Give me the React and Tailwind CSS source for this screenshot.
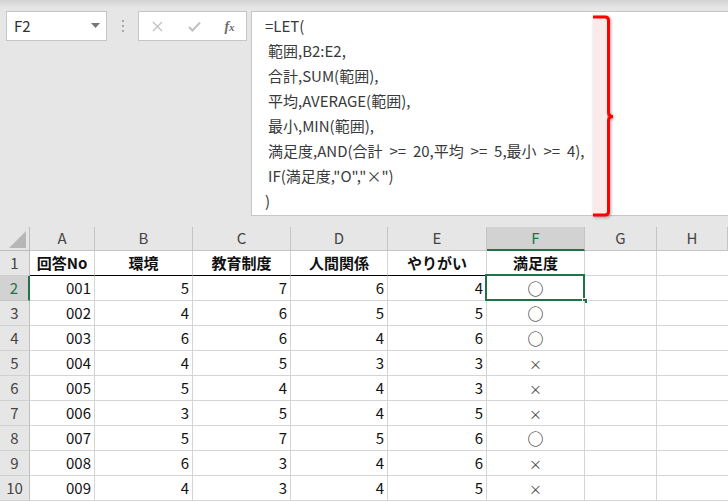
import React from "react";

const FONT = { fontFamily: '"Noto Sans CJK JP", "Noto Sans", sans-serif' };

const COLS = ["A", "B", "C", "D", "E", "F", "G", "H"];

const HEAD = ["回答No", "環境", "教育制度", "人間関係", "やりがい", "満足度"];

const ROWS = [
  ["001", 5, 7, 6, 4, "○"],
  ["002", 4, 6, 5, 5, "○"],
  ["003", 6, 6, 4, 6, "○"],
  ["004", 4, 5, 3, 3, "×"],
  ["005", 5, 4, 4, 3, "×"],
  ["006", 3, 5, 4, 5, "×"],
  ["007", 5, 7, 5, 6, "○"],
  ["008", 6, 3, 4, 6, "×"],
  ["009", 4, 3, 4, 5, "×"],
];

// indented lines get a small left pad instead of a leading space
const FORMULA = [
  { t: "=LET(", ind: false },
  { t: "範囲,B2:E2,", ind: true },
  { t: "合計,SUM(範囲),", ind: true },
  { t: "平均,AVERAGE(範囲),", ind: true },
  { t: "最小,MIN(範囲),", ind: true },
  { t: "満足度,AND(合計 >= 20,平均 >= 5,最小 >= 4),", ind: true },
  { t: 'IF(満足度,"O","×")', ind: true },
  { t: ")", ind: false },
];

const FormulaBar = () => (
  <div className="h-[227px] bg-[#e6e6e6]">
    <div className="h-[8px] bg-gradient-to-b from-[#d3d3d3] to-[#e6e6e6]" />
    <div className="flex items-start pt-[3px]">
      {/* name box */}
      <div className="ml-[6px] flex h-[30px] w-[101px] items-center justify-between border border-[#c6c6c6] bg-white pl-[7px] pr-[6px]">
        <span className="text-[15px] text-[#333]">F2</span>
        <svg width="9" height="6" viewBox="0 0 9 6">
          <path d="M0 0H9L4.5 5Z" fill="#777" />
        </svg>
      </div>
      <div className="flex h-[30px] w-[31px] flex-col items-center justify-center gap-[3px]">
        <span className="h-[2px] w-[2px] bg-[#a8a8a8]" />
        <span className="h-[2px] w-[2px] bg-[#a8a8a8]" />
        <span className="h-[2px] w-[2px] bg-[#a8a8a8]" />
      </div>
      {/* cancel / enter / fx */}
      <div className="flex h-[30px] w-[109px] items-center border border-[#c6c6c6] bg-white">
        <div className="flex w-[37px] justify-center">
          <svg width="11" height="11" viewBox="0 0 11 11">
            <path d="M1 1L10 10M10 1L1 10" stroke="#c2c2c2" strokeWidth="1.4" />
          </svg>
        </div>
        <div className="flex w-[37px] justify-center">
          <svg width="13" height="11" viewBox="0 0 13 11">
            <path d="M1 6L4.5 9.5L12 1.5" fill="none" stroke="#c2c2c2" strokeWidth="2" />
          </svg>
        </div>
        <div className="flex flex-1 justify-center">
          <span
            className="text-[14px] font-bold italic text-[#6b6b6b]"
            style={{ fontFamily: '"Liberation Serif", serif' }}
          >
            f<span className="text-[11px]">x</span>
          </span>
        </div>
      </div>
      {/* formula box */}
      <div className="relative ml-[4px] h-[205px] flex-1 border border-r-0 border-[#c6c6c6] bg-white pl-[13px] pt-[1px]">
        {FORMULA.map((line, i) => (
          <div
            key={i}
            className={`h-[25px] whitespace-pre text-[15px] leading-[25px] text-[#3a3a3a] [word-spacing:3.5px] ${line.ind ? "pl-[3px]" : ""}`}
          >
            {line.t}
          </div>
        ))}
        <svg
          className="absolute left-[340px] top-[3px]"
          width="30"
          height="204"
          viewBox="0 0 30 204"
          style={{ filter: "drop-shadow(1px 1px 1.5px rgba(0,0,0,0.35))" }}
        >
          <rect x="1" y="2" width="14" height="198" fill="#fbeaea" />
          <path
            d="M1 2H13Q16.5 2 16.5 5.5V97Q16.5 101.5 21 101.5Q16.5 101.5 16.5 106V196.5Q16.5 200 13 200H1"
            fill="none"
            stroke="#ff0000"
            strokeWidth="3"
          />
        </svg>
      </div>
    </div>
  </div>
);

const Grid = () => (
  <div className="grid grid-cols-[30px_65px_98px_98px_97px_99px_98px_72px_1fr] grid-rows-[24px_repeat(10,25px)] text-[15px]">
    {/* corner */}
    <div className="flex items-end justify-end border-r border-b border-[#bdbdbd] bg-[#e6e6e6] pb-[2px] pr-[3px]">
      <svg width="17" height="17" viewBox="0 0 17 17">
        <path d="M17 0V17H0Z" fill="#b7b7b7" />
      </svg>
    </div>
    {COLS.map((c) =>
      c === "F" ? (
        <div
          key={c}
          className="flex items-center justify-center border-r border-b-2 border-r-[#c4c4c4] border-b-[#217346] bg-[#d2d2d2] text-[#217346]"
        >
          {c}
        </div>
      ) : (
        <div
          key={c}
          className="flex items-center justify-center border-r border-b border-[#c4c4c4] bg-[#e6e6e6] text-[#444]"
        >
          {c}
        </div>
      )
    )}

    {/* row 1 */}
    <div className="flex items-center justify-center border-r border-b border-r-[#bdbdbd] border-b-[#d0d0d0] bg-[#e6e6e6] text-[#444]">
      1
    </div>
    {HEAD.map((h, i) => (
      <div
        key={i}
        className="flex items-center justify-center border-r border-b border-r-[#d4d4d4] border-b-black bg-white font-bold text-[#111]"
      >
        {h}
      </div>
    ))}
    <div className="border-r border-b border-[#d4d4d4] bg-white" />
    <div className="border-b border-[#d4d4d4] bg-white" />

    {ROWS.map((r, ri) => {
      const n = ri + 2;
      const sel = n === 2;
      return (
        <React.Fragment key={n}>
          {sel ? (
            <div className="flex items-center justify-center border-r-2 border-b border-r-[#217346] border-b-[#c4c4c4] bg-[#d2d2d2] text-[#217346]">
              {n}
            </div>
          ) : (
            <div className="flex items-center justify-center border-r border-b border-r-[#bdbdbd] border-b-[#d0d0d0] bg-[#e6e6e6] text-[#444]">
              {n}
            </div>
          )}
          {r.slice(0, 5).map((v, ci) => (
            <div
              key={ci}
              className="flex items-center justify-end border-r border-b border-[#d4d4d4] bg-white pr-[3px] text-[#111]"
            >
              {v}
            </div>
          ))}
          <div className="relative flex items-center justify-center border-r border-b border-[#d4d4d4] bg-white text-[#222]">
            {r[5] === "○" ? (
              <span className="text-[16px] leading-none">○</span>
            ) : (
              <span className="text-[13px] leading-none text-[#444]">×</span>
            )}
            {sel && (
              <>
                <div className="absolute -left-[2px] -top-[2px] h-[27px] w-[100px] border-2 border-[#217346]" />
                <div className="absolute -right-[4px] -bottom-[4px] h-[6px] w-[6px] border border-white bg-[#217346]" />
              </>
            )}
          </div>
          <div className="border-r border-b border-[#d4d4d4] bg-white" />
          <div className="border-b border-[#d4d4d4] bg-white" />
        </React.Fragment>
      );
    })}
  </div>
);

export default function App() {
  return (
    <div className="h-[502px] w-[728px] overflow-hidden bg-white" style={FONT}>
      <FormulaBar />
      <Grid />
    </div>
  );
}
